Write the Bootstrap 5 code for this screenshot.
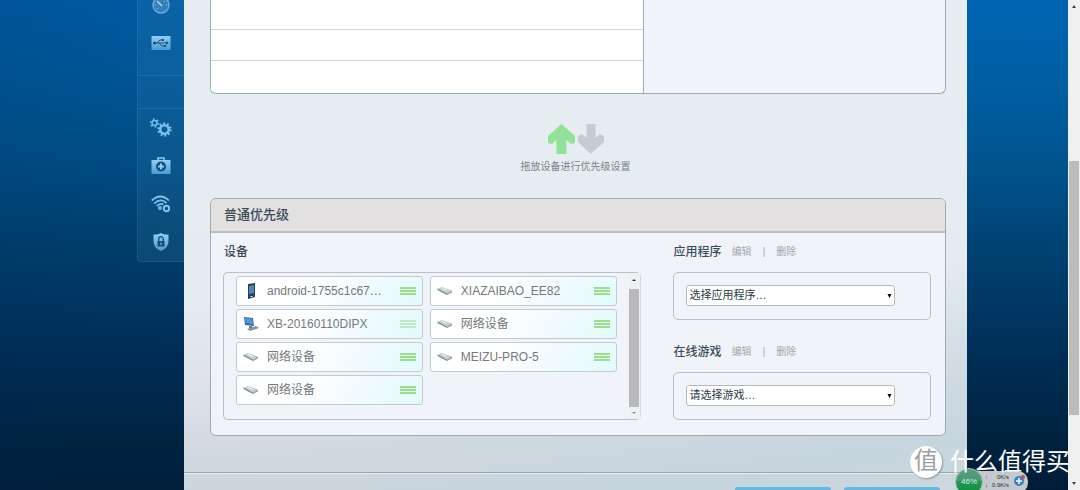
<!DOCTYPE html>
<html lang="zh-CN">
<head>
<meta charset="utf-8">
<meta name="viewport" content="width=device-width, initial-scale=1">
<title>设备优先级设置</title>
<link href="https://cdn.jsdelivr.net/npm/bootstrap@5.3.0/dist/css/bootstrap.min.css" rel="stylesheet">
<style>
body{font-family:"Liberation Sans","Noto Sans CJK SC",sans-serif;font-size:12px;line-height:16px;color:#3b4c57;overflow:hidden}
.desk{display:grid;grid-template-columns:137fr 47px minmax(0,783px) 101fr 12px;grid-template-rows:100%;height:100vh;overflow:hidden;
 background:linear-gradient(90deg,rgba(0,40,80,.25),rgba(0,40,80,.15) 20%,transparent 85%),linear-gradient(#0064b2 0,#0060a6 14%,#005590 32%,#004373 50%,#00305a 70%,#002340 88%,#001d38)}
.rail{background:rgba(120,190,235,.09);border:1px solid rgba(130,190,230,.14);border-width:0 0 1px 1px;border-radius:0 0 0 4px}
.rail-group + .rail-group{border-top:1px solid rgba(130,190,230,.16)}
.rail-first{height:75px;overflow:hidden}
.rail-first a:first-child{margin-top:-14px}
.rail-gap{height:33px}
.rail a{height:38px;flex:none}
.sheet{background:linear-gradient(170deg,transparent 62%,rgba(196,212,222,.9) 92%,rgba(206,216,221,1)),linear-gradient(#e7eef1 0,#e5ecf0 60%,#dcdfe6 86%,#d3d6dd);padding:0 21px 0 26px}
.panel{border:1px solid #9faab2;border-radius:6px;background:#f0f3f7}
.panel-top{border-top:0;border-radius:0 0 6px 6px;overflow:hidden;display:grid;grid-template-columns:minmax(0,433fr) minmax(0,301fr);height:94px}
.slots{background:#fff;border-right:1px solid #9faab2;display:grid;grid-template-rows:29px 31px 1fr}
.slots div + div{border-top:1px solid #d2d6d9}
.hint{padding:29px 5px 23px 0;height:104px;font-size:10px;color:#7c8388}
.panel-title{background:#e2e0e1;border-bottom:2px solid #b7bdc2;border-radius:6px 6px 0 0;height:34px;padding:0 13px;font-size:13px}
.panel-cols{display:grid;grid-template-columns:minmax(0,417fr) minmax(0,258fr);column-gap:32px;padding:11px 14px 15px 12px}
.head-row{height:16px;margin-bottom:12px;padding-left:1px}
h1,h2{margin:0;font-weight:500;line-height:16px}
h1{font-size:13px}h2{font-size:12px}
.acts{font-size:10px;color:#a3a9ad;gap:11px;margin-left:10px}
.acts a{color:#a3a9ad;text-decoration:none}
.devbox{border:1px solid #b9bfc5;border-radius:5px;border-right-color:#d5d9dc;height:148px}
.devs{display:grid;grid-template-columns:1fr 1fr;grid-auto-rows:30px;gap:3px 7px;padding:3px 12px 0 12px;margin:0;list-style:none;flex:1;align-content:start}
.dev{border:1px solid #c3cbd0;border-radius:3px;background:linear-gradient(120deg,#fff 35%,#f4fbfe 60%,#e2fafc);padding:0 6px;color:#74797d}
.dev .handle{margin-left:auto}
.dev .ico{margin-right:8px;flex:none}
.vbar{width:11px;background:#eef0f2}
.vbar .thumb{background:#b9b9b9;flex:1;width:10px}
.vbar svg,.pagebar svg{display:block}
.optbox{border:1px solid #b9bfc5;border-radius:5px;height:48px;padding:12px}
.optbox + .head-row{margin-top:24px}
.pick{width:209px;max-width:100%}
.pick select{appearance:none;display:block;width:100%;height:21px;border:1px solid #b5b9bc;border-radius:3px;background:#fff;font-size:11px;line-height:16px;color:#2c3b44;padding:0 16px 2px 3px}
.pick svg{right:3px;top:8px}
.foot{margin:36px -21px 0 -26px;border-top:1px solid #9ba5ac;box-shadow:inset 0 1px #e6ecef;padding:14px 27px 0;gap:13px;height:60px}
.foot button{width:96px;height:30px;border:0;border-radius:3px;background:#5bbde6}
.pagebar{grid-column:5;background:#f0f0f0;display:grid;grid-template-rows:16px 145fr 254fr 59fr 16px;justify-items:center}
.pagebar .thumb{background:#bcbcbc;width:10px}
.stamp{right:10px;bottom:11px;gap:8px;color:#fff;font-size:24px;line-height:34px;z-index:3}
.seal{width:32px;height:32px;background:#fff;border-radius:50%;color:#9aa0a5;font-size:24px;line-height:30px;text-align:center;box-shadow:1px 1px 2px #8d979f}
.meter{left:calc(100% - 125px);bottom:-6px;z-index:2}
.ball{width:28px;height:28px;border-radius:50%;background:linear-gradient(#5c9d83 0,#4a9875 45%,#1f9a50 46%,#158843);border:1px solid #9fc5b4;color:#d5eee0;font-size:8px;z-index:1}
.rates{background:#c3c9cd;border-radius:0 10px 10px 0;height:22px;width:52px;margin-left:-7px;padding:2px 3px 0 9px;font-size:6px;line-height:8px;color:#26323a}
</style>
</head>
<body>
<svg width="0" height="0" class="position-absolute" aria-hidden="true">
 <defs>
  <linearGradient id="sky" x2="0" y2="1"><stop stop-color="#8fd0f6"/><stop offset="1" stop-color="#4a9cd0"/></linearGradient>
  <symbol id="net" viewBox="0 0 16 10"><path d="M.5 2.500 5 1l10 3.500-4.500 3z" fill="#c4ced2"/><path d="M.5 2.500V4L10 9V7.500z" fill="#76868c"/><path d="M10 7.500V9l5-2.500v-2z" fill="#94a3a9"/><path d="m5 2.500 5 1.800" stroke="#edf5f6"/></symbol>
  <symbol id="grip" viewBox="0 0 16 8"><path d="M0 1h16M0 4h16M0 7h16" stroke="#80d667" stroke-width="1.500"/></symbol>
 </defs>
</svg>
<div class="desk position-relative">
 <div></div>
 <nav class="rail align-self-start" aria-label="功能">
  <div class="rail-group rail-first d-flex flex-column">
   <a href="#" aria-label="测速" class="d-flex align-items-center justify-content-center"><svg width="20" height="20" viewBox="0 0 20 20"><circle cx="10" cy="10" r="8" fill="#367fb4" stroke="#67aee0" stroke-width="1.500"/><path d="m6 6 5 5" stroke="#a5d8f7" stroke-width="1.500"/><path d="M4 10h1M15 10h1M10 4v1M6 14l1-1M14 6l-1 1" stroke="#8bc8ee"/></svg></a>
   <a href="#" aria-label="USB" class="d-flex align-items-center justify-content-center"><svg width="20" height="16" viewBox="0 0 20 16"><path d="M.5 1h19v14H.5z" fill="url(#sky)"/><path d="M2 8h14M6 8l3-3h3M8 8l3 3h3" fill="none" stroke="#1a557f"/><circle cx="3.500" cy="8" r="1.500" fill="#1a557f"/><path d="m15 6 3 2-3 2zM11 4h2v2h-2zM13 10h2v2h-2z" fill="#1a557f"/></svg></a>
  </div>
  <div class="rail-group rail-gap"></div>
  <div class="rail-group d-flex flex-column">
   <a href="#" aria-label="高级设置" class="d-flex align-items-center justify-content-center"><svg width="24" height="20" viewBox="0 0 24 20" fill="none" stroke="#79bdea"><circle cx="5.500" cy="5" r="2.500" stroke-width="1.500"/><circle cx="5.500" cy="5" r="4" stroke-width="1.500" stroke-dasharray="1.700 2.490"/><circle cx="15.500" cy="11.500" r="4.200" stroke-width="2.600"/><circle cx="15.500" cy="11.500" r="6.100" stroke-width="2.200" stroke-dasharray="1.800 2.032"/></svg></a>
   <a href="#" aria-label="故障排查" class="d-flex align-items-center justify-content-center"><svg width="20" height="18" viewBox="0 0 20 18"><path d="M7 3V1h6v2" fill="none" stroke="#8fcdf2" stroke-width="1.500"/><path d="M.5 3h19v14H.5z" fill="url(#sky)"/><circle cx="10" cy="9.500" r="5" fill="#174e78"/><path d="M10 6.500v6M7 9.500h6" stroke="#8bcdf3" stroke-width="2"/></svg></a>
   <a href="#" aria-label="无线" class="d-flex align-items-center justify-content-center"><svg width="20" height="18" viewBox="0 0 20 18" fill="none" stroke="#82c3ec" stroke-width="1.700"><path d="M.8 5.500Q9.500-2.500 18 5.500M3.300 8.500Q9.500 2.500 15.500 8M5.800 11Q9 7.500 12.500 9.500"/><circle cx="9" cy="13" r="1.300" stroke-width="1.400"/><circle cx="15.500" cy="13.500" r="2.700" stroke-width="1.900"/></svg></a>
   <a href="#" aria-label="安全" class="d-flex align-items-center justify-content-center"><svg width="18" height="20" viewBox="0 0 18 20"><path d="M1.500 2.500Q6 3 9 1q3 2 7.500 1.500V9q0 7-7.500 10Q1.500 16 1.500 9z" fill="url(#sky)"/><path d="M5.500 9h7v5.500h-7z" fill="#164c76"/><path d="M6.700 9V7a2.300 2.300 0 0 1 4.600 0v2" fill="none" stroke="#164c76" stroke-width="1.300"/><path d="M9 10.500v2.500" stroke="#8bcdf3"/></svg></a>
  </div>
 </nav>
 <main class="sheet">
  <section class="panel panel-top"><div class="slots"><div></div><div></div><div></div></div><div></div></section>
  <div class="hint d-flex flex-column align-items-center">
   <svg width="58" height="32" viewBox="0 0 58 32" class="mb-1 flex-shrink-0"><path d="M14.500 1 28 13v7l-4 1-4.500-4v14h-10V17L5 21l-4-1v-7z" fill="#91e296"/><path d="M43.500 31 57 19v-6l-4-2-4.500 4V1h-9v14L35 11l-4 2v6z" fill="#c6cbd3"/></svg>
   <span>拖放设备进行优先级设置</span>
  </div>
  <section class="panel">
   <header class="panel-title d-flex align-items-center"><h1>普通优先级</h1></header>
   <div class="panel-cols">
    <div>
     <div class="head-row d-flex align-items-center"><h2>设备</h2></div>
     <div class="devbox d-flex">
      <ul class="devs">
       <li class="dev d-flex align-items-center"><svg class="ico" width="16" height="18" viewBox="0 0 16 18"><path d="m5 2 7-1v14l-7 2z" fill="#293e56"/><path d="m6 4 5-1v8l-5 1z" fill="#4e88b8"/><path d="M7 14.500h3" stroke="#a2c3dc"/></svg>android-1755c1c67…<svg class="handle" width="16" height="8"><use href="#grip"/></svg></li>
       <li class="dev d-flex align-items-center"><svg class="ico" width="16" height="10"><use href="#net"/></svg>XIAZAIBAO_EE82<svg class="handle" width="16" height="8"><use href="#grip"/></svg></li>
       <li class="dev d-flex align-items-center"><svg class="ico" width="16" height="16" viewBox="0 0 16 16"><path d="m1 1 9 1 1 8-9-1z" fill="#336dac"/><path d="m2 2 7 1 1 5-7-1z" fill="#5398d4"/><path d="M6 10h3l1 2H6z" fill="#6c7c85"/><path d="m4 13 9-3 3 2-9 3z" fill="#83939a"/></svg>XB-20160110DIPX<svg class="handle opacity-50" width="16" height="8"><use href="#grip"/></svg></li>
       <li class="dev d-flex align-items-center"><svg class="ico" width="16" height="10"><use href="#net"/></svg>网络设备<svg class="handle" width="16" height="8"><use href="#grip"/></svg></li>
       <li class="dev d-flex align-items-center"><svg class="ico" width="16" height="10"><use href="#net"/></svg>网络设备<svg class="handle" width="16" height="8"><use href="#grip"/></svg></li>
       <li class="dev d-flex align-items-center"><svg class="ico" width="16" height="10"><use href="#net"/></svg>MEIZU-PRO-5<svg class="handle" width="16" height="8"><use href="#grip"/></svg></li>
       <li class="dev d-flex align-items-center"><svg class="ico" width="16" height="10"><use href="#net"/></svg>网络设备<svg class="handle" width="16" height="8"><use href="#grip"/></svg></li>
      </ul>
      <div class="vbar d-flex flex-column align-items-center" aria-hidden="true"><svg width="10" height="16"><path d="m3 8 2-2 2 2z" fill="#333"/></svg><div class="thumb"></div><svg width="10" height="12"><path d="m3 5 2 2 2-2z" fill="#888"/></svg></div>
     </div>
    </div>
    <div>
     <div class="head-row d-flex align-items-center"><h2><label for="app">应用程序</label></h2><span class="acts d-flex"><a href="#">编辑</a><span>|</span><a href="#">删除</a></span></div>
     <div class="optbox"><div class="pick position-relative"><select id="app"><option>选择应用程序…</option></select><svg class="position-absolute pe-none" width="5" height="5"><path d="M.5 1h4L2.500 5z"/></svg></div></div>
     <div class="head-row d-flex align-items-center"><h2><label for="game">在线游戏</label></h2><span class="acts d-flex"><a href="#">编辑</a><span>|</span><a href="#">删除</a></span></div>
     <div class="optbox"><div class="pick position-relative"><select id="game"><option>请选择游戏…</option></select><svg class="position-absolute pe-none" width="5" height="5"><path d="M.5 1h4L2.500 5z"/></svg></div></div>
    </div>
   </div>
  </section>
  <footer class="foot d-flex justify-content-end"><button type="button" aria-label="取消"></button><button type="button" aria-label="应用"></button></footer>
 </main>
 <div class="pagebar" aria-hidden="true"><svg width="12" height="16"><path d="m4 8 2-3 2 3z" fill="#444"/></svg><div></div><div class="thumb"></div><div></div><svg width="12" height="16"><path d="m4 8 2 3 2-3z" fill="#444"/></svg></div>
 <div class="meter position-absolute d-flex align-items-center"><div class="ball d-flex align-items-center justify-content-center position-relative">46%</div>
  <div class="rates d-flex justify-content-between"><div><span class="text-danger">↑</span><br>↓</div><div class="text-end">0K/s<br>0.9K/s</div><svg width="12" height="16" viewBox="0 0 12 16"><circle cx="6" cy="8" r="5" fill="#3680c8"/><path d="M6 5v6M3 8h6" stroke="#fff" stroke-width="1.500"/><circle cx="10" cy="4" r="2" fill="#d34a44"/></svg></div>
 </div>
 <div class="stamp position-absolute d-flex align-items-center"><span class="seal">值</span><span>什么值得买</span></div>
</div>
<script src="https://cdn.jsdelivr.net/npm/bootstrap@5.3.0/dist/js/bootstrap.bundle.min.js"></script>
</body>
</html>
